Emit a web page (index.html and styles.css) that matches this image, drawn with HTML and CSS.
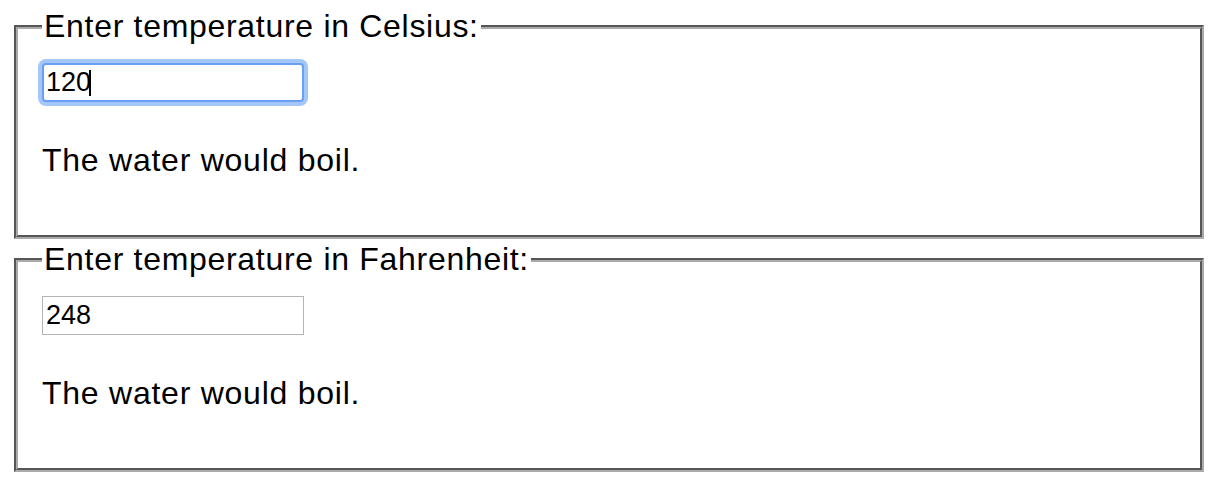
FILE: index.html
```html
<!DOCTYPE html>
<html lang="en">
<head>
<meta charset="utf-8">
<title>Temperature</title>
<link rel="stylesheet" href="styles.css">
</head>
<body>
<div class="page">
  <fieldset class="temp">
    <legend class="temp-legend">Enter temperature in Celsius:</legend>
    <span class="field-wrap">
      <input class="temp-input is-focused" type="text" value="120">
      <span class="caret"></span>
    </span>
    <p class="verdict">The water would boil.</p>
  </fieldset>
  <fieldset class="temp">
    <legend class="temp-legend">Enter temperature in Fahrenheit:</legend>
    <span class="field-wrap">
      <input class="temp-input" type="text" value="248">
    </span>
    <p class="verdict">The water would boil.</p>
  </fieldset>
</div>
</body>
</html>
```
FILE: styles.css
```css
html, body {
  margin: 0;
  background: #fff;
}
body {
  font-family: "Liberation Sans", Arial, sans-serif;
  color: #000;
}
.page {
  display: flex;
  flex-direction: column;
  gap: 2px;
  padding: 8px 6px 0 14px;
}
.temp {
  margin: 0;
  min-width: 0;
  border: 4px groove #aaa;
  padding: 18px 24px 24px;
}
.temp-legend {
  padding: 0 2px;
  font-size: 32px;
  line-height: 37px;
  letter-spacing: 0.7px;
}
.field-wrap {
  position: relative;
  display: block;
  width: 262px;
  height: 39px;
}
.temp-input {
  display: block;
  box-sizing: border-box;
  width: 262px;
  height: 39px;
  margin: 0;
  border: 1px solid #b4b4b4;
  padding: 0 3px;
  font-family: "Liberation Sans", Arial, sans-serif;
  font-size: 27px;
  color: #000;
  background: #fff;
  outline: none;
}
.temp-input.is-focused {
  border: 2px solid #6a9ff4;
  border-radius: 4px;
  padding: 0 2px;
  box-shadow: 0 0 0 4px rgba(125, 175, 248, 0.7);
}
.caret {
  position: absolute;
  left: 47px;
  top: 7px;
  width: 2px;
  height: 26px;
  background: #000;
}
.verdict {
  margin: 40px 0 32px;
  font-size: 32px;
  line-height: 37px;
  letter-spacing: 0.75px;
}
```
